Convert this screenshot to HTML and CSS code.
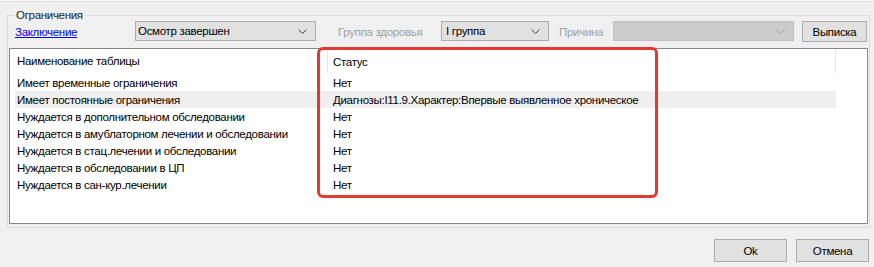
FILE: index.html
```html
<!DOCTYPE html>
<html lang="ru">
<head>
    <meta charset="UTF-8">
    <title>Ограничения</title>
    <link rel="stylesheet" href="styles.css">
</head>
<body>
    <div class="group">
        <span class="group-title">Ограничения</span>

        <div class="toolbar">
            <a href="#" class="link">Заключение</a>
            <div class="combo combo-main">
                <span>Осмотр завершен</span>
                <svg width="9" height="5" viewBox="0 0 9 5"><polyline points="0.5,0.5 4.5,4.5 8.5,0.5" fill="none" stroke="#404040" stroke-width="1"/></svg>
            </div>
            <span class="label label-health">Группа здоровья</span>
            <div class="combo combo-group">
                <span>I группа</span>
                <svg width="9" height="5" viewBox="0 0 9 5"><polyline points="0.5,0.5 4.5,4.5 8.5,0.5" fill="none" stroke="#404040" stroke-width="1"/></svg>
            </div>
            <span class="label label-reason">Причина</span>
            <div class="combo combo-disabled">
                <span></span>
                <svg width="9" height="5" viewBox="0 0 9 5"><polyline points="0.5,0.5 4.5,4.5 8.5,0.5" fill="none" stroke="#a8a8a8" stroke-width="1"/></svg>
            </div>
            <button class="btn btn-extract">Выписка</button>
        </div>

        <div class="list">
            <div class="list-head">
                <div class="col-name">Наименование таблицы</div>
                <div class="col-status">Статус</div>
            </div>
            <div class="row"><div class="col-name">Имеет временные ограничения</div><div class="col-status">Нет</div></div>
            <div class="row selected"><div class="col-name">Имеет постоянные ограничения</div><div class="col-status">Диагнозы:I11.9.Характер:Впервые выявленное хроническое</div></div>
            <div class="row"><div class="col-name">Нуждается в дополнительном обследовании</div><div class="col-status">Нет</div></div>
            <div class="row"><div class="col-name">Нуждается в амублаторном лечении и обследовании</div><div class="col-status">Нет</div></div>
            <div class="row"><div class="col-name">Нуждается в стац.лечении и обследовании</div><div class="col-status">Нет</div></div>
            <div class="row"><div class="col-name">Нуждается в обследовании в ЦП</div><div class="col-status">Нет</div></div>
            <div class="row"><div class="col-name">Нуждается в сан-кур.лечении</div><div class="col-status">Нет</div></div>

            <div class="highlight"></div>
        </div>
    </div>

    <div class="footer">
        <button class="btn btn-footer">Ok</button>
        <button class="btn btn-footer">Отмена</button>
    </div>
</body>
</html>
```

FILE: styles.css
```css
body{
    margin: 0;
    background-color: #f0f0f0;
    box-shadow: inset 0 1px #f8f8f8, inset 0 2px #e2e2e2;
    font-family: "Liberation Sans", Arial, sans-serif;
    font-size: 11.5px;
    letter-spacing: -0.3px;
    color: #000;
    width: 874px;
    height: 267px;
    overflow: hidden;
}
.group{
    position: relative;
    margin: 15px 4px 0 7px;
    height: 211px;
    border: 1px solid #dcdcdc;
}
.group-title{
    position: absolute;
    top: -8px;
    left: 7px;
    padding: 0 1px;
    background-color: #f0f0f0;
    color: #1e1e1e;
    line-height: 15px;
}
.toolbar{
    display: flex;
    align-items: center;
    height: 21px;
    margin-top: 5px;
    padding-left: 7px;
}
.link{
    flex: none;
    width: 120px;
    color: #0000ff;
    text-decoration: underline;
}
.combo{
    flex: none;
    box-sizing: border-box;
    height: 20px;
    display: flex;
    align-items: center;
    justify-content: space-between;
    background-color: #e1e1e1;
    border: 1px solid #adadad;
    padding: 0 8px 0 2px;
    align-self: flex-start;
}
.combo-main{
    width: 181px;
}
.combo-group{
    width: 108px;
    padding-left: 4px;
}
.combo-disabled{
    width: 181px;
    background-color: #cccccc;
    border-color: #bfbfbf;
}
.label{
    flex: none;
    color: #a0a0a0;
}
.label-health{
    width: 103px;
    margin-left: 22px;
}
.label-reason{
    width: 54px;
    margin-left: 10px;
}
.btn{
    font-family: "Liberation Sans", Arial, sans-serif;
    font-size: 11.5px;
    letter-spacing: -0.3px;
    color: #000;
    background-color: #e1e1e1;
    border: 1px solid #adadad;
    padding: 0;
    box-sizing: border-box;
}
.btn-extract{
    width: 65px;
    height: 21px;
    margin-left: 8px;
    align-self: flex-start;
}
.list{
    position: relative;
    box-sizing: border-box;
    height: 176px;
    margin: 6px 1px 0 1px;
    background-color: #fff;
    border: 1px solid #828790;
    padding-left: 5px;
}
.list-head{
    display: flex;
    width: 821px;
    height: 25px;
    align-items: center;
    border-right: 1px solid #e5e5e5;
    box-sizing: border-box;
}
.list-head .col-name{
    width: 310px;
    padding-left: 2px;
    border-right: 1px solid #e5e5e5;
    line-height: 23px;
}
.list-head .col-status{
    padding-left: 5px;
}
.row{
    display: flex;
    width: 821px;
    height: 17px;
    align-items: center;
}
.row.selected{
    background-color: #efefef;
}
.row .col-name{
    width: 316px;
    padding-left: 2px;
}
.row .col-status{
    padding-left: 0;
}
.highlight{
    position: absolute;
    left: 307px;
    top: -2px;
    width: 341px;
    height: 151px;
    box-sizing: border-box;
    border: 3px solid #e3392f;
    border-radius: 6px;
}
.footer{
    display: flex;
    justify-content: flex-end;
    gap: 9px;
    margin-top: 11px;
    padding-right: 5px;
}
.btn-footer{
    width: 73px;
    height: 23px;
}
```
